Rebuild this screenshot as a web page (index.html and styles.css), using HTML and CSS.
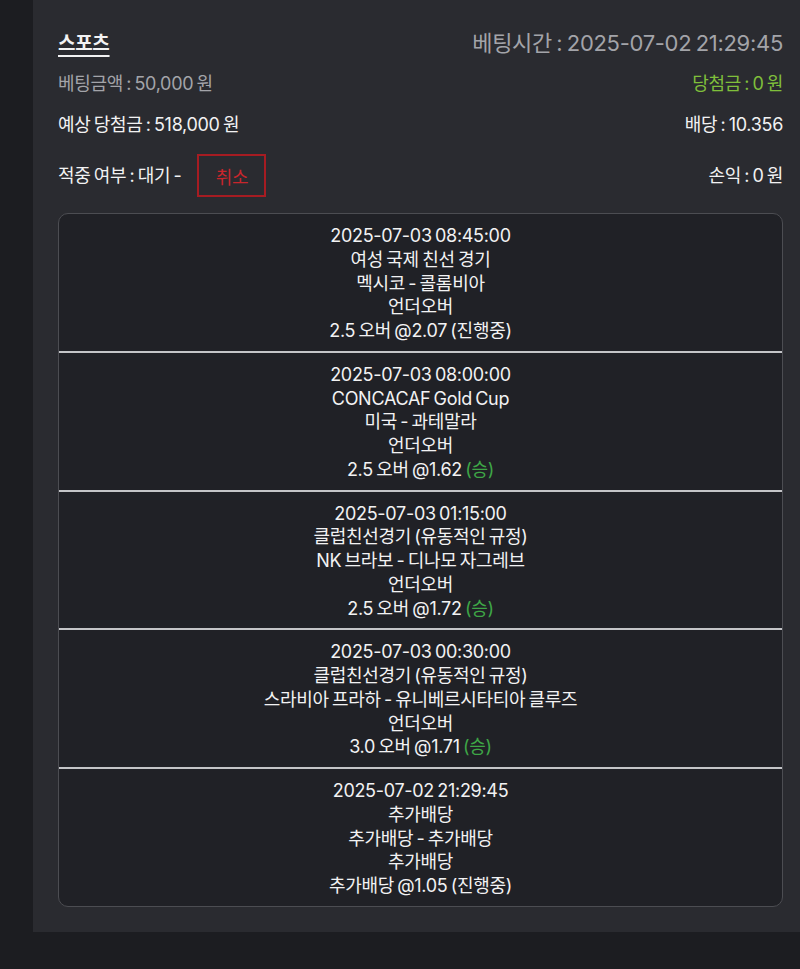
FILE: index.html
```html
<!DOCTYPE html>
<html lang="ko">
<head>
<meta charset="utf-8">
<link rel="stylesheet" href="styles.css">
</head>
<body>
<div class="panel">
  <div class="info-row row1">
    <span class="title">스포츠</span>
    <span class="bet-time">베팅시간 : 2025-07-02 21:29:45</span>
  </div>
  <div class="info-row row2">
    <span class="muted">베팅금액 : 50,000 원</span>
    <span class="win-amount">당첨금 : 0 원</span>
  </div>
  <div class="info-row row3">
    <span>예상 당첨금 : 518,000 원</span>
    <span>배당 : 10.356</span>
  </div>
  <div class="info-row row4">
    <span class="status"><span class="status-text">적중 여부 : 대기 -</span> <span class="cancel">취소</span></span>
    <span class="status-text">손익 : 0 원</span>
  </div>
  <div class="list">
    <div class="item">
      <div>2025-07-03 08:45:00</div>
      <div>여성 국제 친선 경기</div>
      <div>멕시코 - 콜롬비아</div>
      <div>언더오버</div>
      <div>2.5 오버 @2.07 (진행중)</div>
    </div>
    <div class="item">
      <div>2025-07-03 08:00:00</div>
      <div>CONCACAF Gold Cup</div>
      <div>미국 - 과테말라</div>
      <div>언더오버</div>
      <div>2.5 오버 @1.62 <span class="win">(승)</span></div>
    </div>
    <div class="item">
      <div>2025-07-03 01:15:00</div>
      <div>클럽친선경기 (유동적인 규정)</div>
      <div>NK 브라보 - 디나모 자그레브</div>
      <div>언더오버</div>
      <div>2.5 오버 @1.72 <span class="win">(승)</span></div>
    </div>
    <div class="item">
      <div>2025-07-03 00:30:00</div>
      <div>클럽친선경기 (유동적인 규정)</div>
      <div>스라비아 프라하 - 유니베르시타티아 클루즈</div>
      <div>언더오버</div>
      <div>3.0 오버 @1.71 <span class="win">(승)</span></div>
    </div>
    <div class="item">
      <div>2025-07-02 21:29:45</div>
      <div>추가배당</div>
      <div>추가배당 - 추가배당</div>
      <div>추가배당</div>
      <div>추가배당 @1.05 (진행중)</div>
    </div>
  </div>
</div>
</body>
</html>
```
FILE: styles.css
```css
html, body {
  margin: 0;
  padding: 0;
  background: #1c1d21;
}
body {
  font-family: Inter, "Noto Sans CJK KR", sans-serif;
  color: #f2f2f3;
  font-size: 18px;
  letter-spacing: -0.3px;
  word-spacing: -1.5px;
}
.panel {
  margin-left: 33px;
  background: #2a2b30;
  padding: 26px 17px 25px 25px;
}
.info-row {
  display: flex;
  justify-content: space-between;
  align-items: center;
}
.row1 { height: 30px; }
.row2 { height: 28px; margin-top: 12px; }
.row3 { height: 28px; margin-top: 13px; }
.row4 { height: 43px; margin-top: 17px; }
.title {
  font-size: 19px;
  font-weight: 700;
  text-decoration: underline;
  text-underline-offset: 5px;
  text-decoration-thickness: 1.5px;
}
.bet-time {
  font-size: 22px;
  color: #a3a4a9;
}
.muted { color: #a3a4a9; }
.win-amount { color: #7fbf3b; }
.status {
  display: flex;
  align-items: center;
}
.status-text {
  padding-bottom: 3px;
}
.cancel {
  display: inline-flex;
  align-items: center;
  justify-content: center;
  box-sizing: border-box;
  width: 69px;
  height: 43px;
  margin-left: 16px;
  border: 2px solid #a61c22;
  color: #c8262c;
}
.list {
  margin-top: 16px;
  background: #202126;
  border: 1px solid #4c4d52;
  border-radius: 10px;
  overflow: hidden;
}
.item {
  text-align: center;
  line-height: 23.75px;
  padding: 10px 0 8px;
  border-bottom: 2px solid #c4c5c8;
}
.item:last-child { border-bottom: none; }
.win { color: #3ea646; }
```
